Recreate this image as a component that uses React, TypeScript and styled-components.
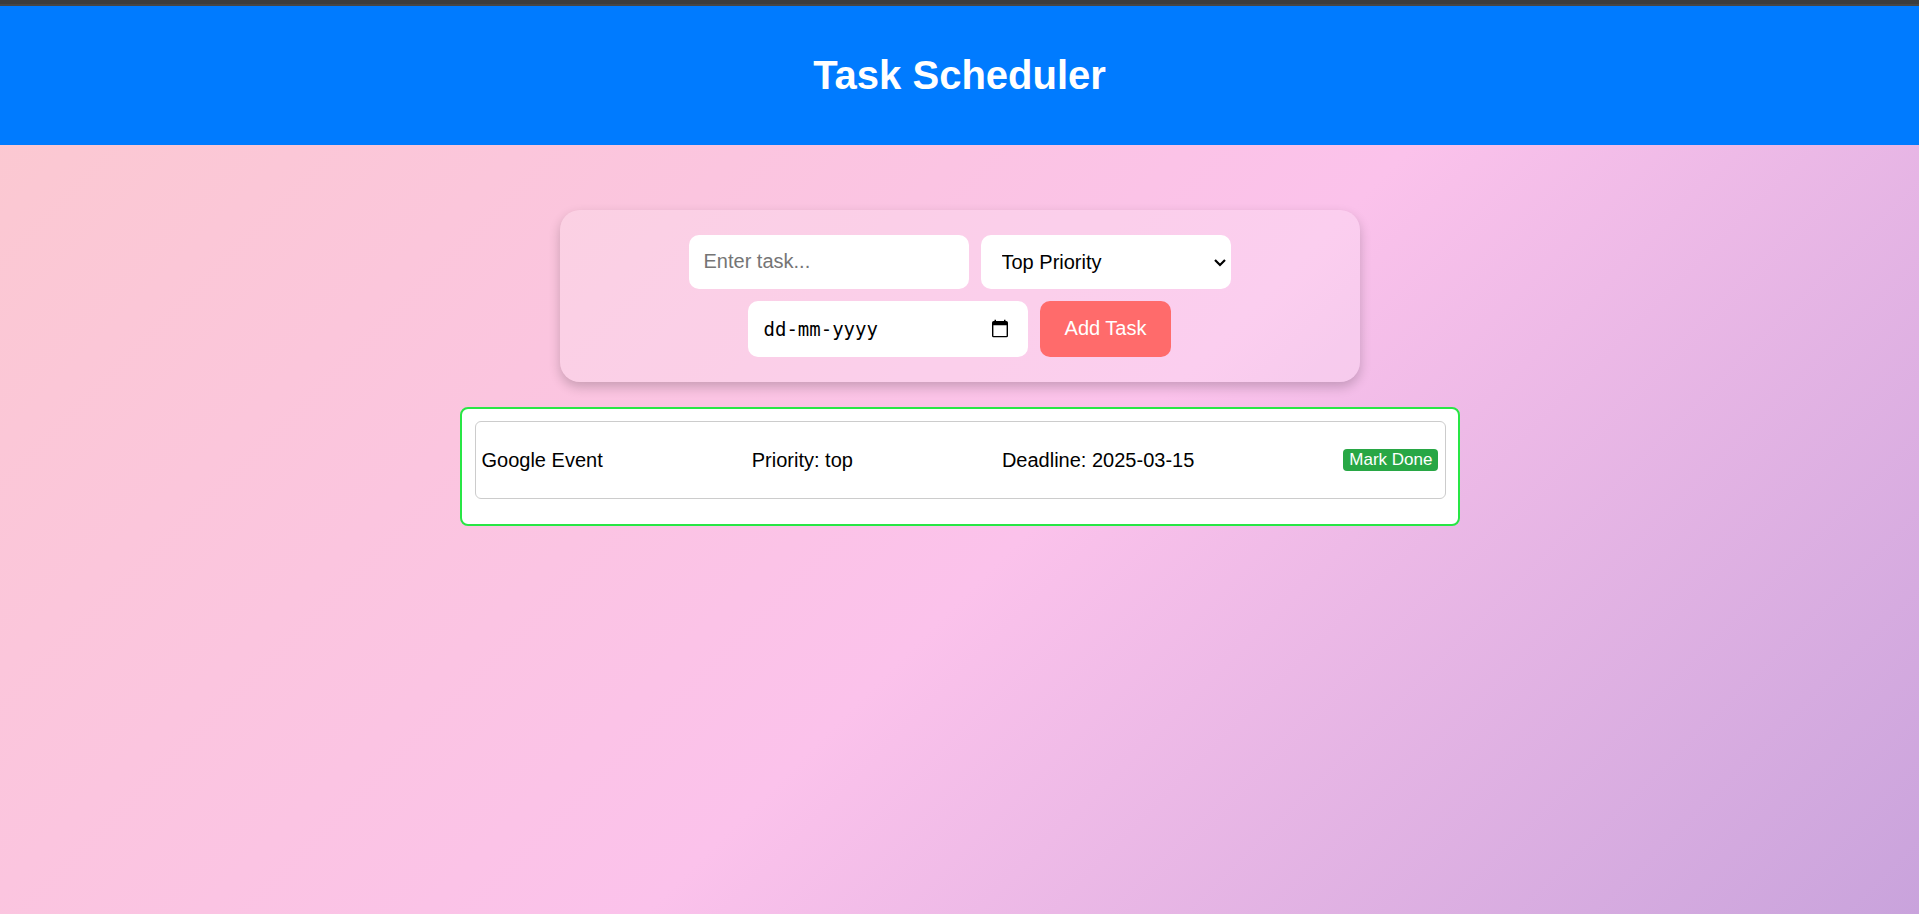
import React, { useState } from "react";
import styled, { createGlobalStyle } from "styled-components";

const GlobalStyle = createGlobalStyle`
  *, *::before, *::after { box-sizing: border-box; }
  body {
    margin: 0;
    font-family: Arial, "Liberation Sans", sans-serif;
    font-size: 20px;
    line-height: 22px;
    color: #000;
  }
`;

const Page = styled.div`
  min-height: 100vh;
  display: flex;
  flex-direction: column;
  align-items: center;
  background: linear-gradient(135deg, #fbc9cf, #fbc2eb 55%, #c9a3dc);
`;

const Header = styled.header`
  align-self: stretch;
  padding: 48px 24px 47px;
  border-top: 4px solid #3c3c3c;
  box-shadow: inset 0 2px #464646;
  background: #007bff;
  color: #fff;
  text-align: center;
`;

const Title = styled.h1`
  margin: 0;
  font-size: 40px;
  line-height: 46px;
  font-weight: bold;
`;

const TaskForm = styled.form`
  width: 100%;
  max-width: 800px;
  margin-top: 65px;
  padding: 25px;
  display: flex;
  flex-wrap: wrap;
  justify-content: center;
  gap: 12px;
  border-radius: 20px;
  background: rgba(255, 255, 255, 0.2);
  box-shadow: 0 5px 12px rgba(0, 0, 0, 0.2);
`;

const Field = styled.div<{ $width: number; $height: number }>`
  position: relative;
  width: ${(p) => p.$width}px;
  height: ${(p) => p.$height}px;
  display: flex;
`;

const TextInput = styled.input<{ $mono?: boolean }>`
  flex: 1;
  min-width: 0;
  padding: ${(p) => (p.$mono ? "0 16px" : "0 15px 2px")};
  border: 0;
  border-radius: 10px;
  background: #fff;
  color: #000;
  font-family: ${(p) =>
    p.$mono ? '"DejaVu Sans Mono", monospace' : 'Arial, "Liberation Sans", sans-serif'};
  font-size: ${(p) => (p.$mono ? 19 : 20)}px;

  &::placeholder {
    color: ${(p) => (p.$mono ? "#000" : "#757575")};
    opacity: 1;
  }
`;

const PrioritySelect = styled.select`
  flex: 1;
  padding: 0 21px;
  appearance: none;
  border: 0;
  border-radius: 10px;
  background: #fff;
  color: #000;
  font-family: inherit;
  font-size: 20px;
`;

const Chevron = styled.svg`
  position: absolute;
  right: 4px;
  top: 20px;
  width: 14px;
  height: 14px;
  pointer-events: none;
`;

const PickerButton = styled.button`
  position: absolute;
  right: 18px;
  top: 18px;
  width: 20px;
  height: 20px;
  padding: 0;
  border: 0;
  background: none;
  cursor: pointer;

  svg { display: block; }
`;

const AddButton = styled.button`
  height: 56px;
  padding: 0 25px 2px;
  border: 0;
  border-radius: 10px;
  background: #ff6b6b;
  color: #fff;
  font-family: inherit;
  font-size: 20px;
  cursor: pointer;
`;

const TaskList = styled.ul`
  width: 100%;
  max-width: 1000px;
  margin: 25px 0 0;
  padding: 12px 12px 13px 13px;
  list-style: none;
  border: 2px solid #28e645;
  border-radius: 8px;
  background: #fff;
`;

const TaskRow = styled.li`
  min-height: 78px;
  margin-bottom: 12px;
  padding: 6px;
  display: flex;
  align-items: center;
  justify-content: space-between;
  border: 1px solid #ccc;
  border-radius: 6px;
`;

const DoneButton = styled.button`
  height: 22px;
  padding: 0 6px;
  border: 0;
  border-radius: 4px;
  background: #28a745;
  color: #fff;
  font-family: inherit;
  font-size: 17px;
  line-height: 22px;
  cursor: pointer;
`;

interface Task {
  name: string;
  priority: string;
  deadline: string;
}

export default function App() {
  const [tasks, setTasks] = useState<Task[]>([
    { name: "Google Event", priority: "top", deadline: "2025-03-15" },
  ]);
  const [name, setName] = useState("");
  const [priority, setPriority] = useState("top");
  const [deadline, setDeadline] = useState("");

  const addTask = (e: React.FormEvent) => {
    e.preventDefault();
    if (!name || !deadline) return;
    setTasks([...tasks, { name, priority, deadline }]);
    setName("");
    setDeadline("");
  };

  return (
    <Page>
      <GlobalStyle />
      <Header>
        <Title>Task Scheduler</Title>
      </Header>
      <TaskForm onSubmit={addTask}>
        <Field $width={280} $height={54}>
          <TextInput
            type="text"
            aria-label="Task"
            placeholder="Enter task..."
            value={name}
            onChange={(e) => setName(e.target.value)}
          />
        </Field>
        <Field $width={250} $height={54}>
          <PrioritySelect
            aria-label="Priority"
            value={priority}
            onChange={(e) => setPriority(e.target.value)}
          >
            <option value="top">Top Priority</option>
            <option value="middle">Middle Priority</option>
            <option value="low">Less Priority</option>
          </PrioritySelect>
          <Chevron viewBox="0 0 14 14" aria-hidden="true">
            <path d="M2 5l5 5 5-5" fill="none" stroke="#000" strokeWidth="2.2" />
          </Chevron>
        </Field>
        <Field $width={280} $height={56}>
          <TextInput
            $mono
            type="text"
            aria-label="Deadline"
            placeholder="dd-mm-yyyy"
            value={deadline}
            onChange={(e) => setDeadline(e.target.value)}
          />
          <PickerButton type="button" aria-label="Choose date">
            <svg width="20" height="20" viewBox="0 0 20 20" aria-hidden="true">
              <path
                fillRule="evenodd"
                d="M4.500 .8h1.500V2h8V.8h1.500V2h.8A1.700 1.700 0 0 1 18 3.700V16.800a1.500 1.500 0 0 1-1.500 1.500h-13A1.500 1.500 0 0 1 2 16.800V3.700A1.700 1.700 0 0 1 3.700 2h.8zM3.400 6.200v10.700h13.200V6.200z"
              />
            </svg>
          </PickerButton>
        </Field>
        <AddButton type="submit">Add Task</AddButton>
      </TaskForm>
      <TaskList>
        {tasks.map((task, i) => (
          <TaskRow key={i}>
            <span>{task.name}</span>
            <span>Priority: {task.priority}</span>
            <span>Deadline: {task.deadline}</span>
            <DoneButton type="button" onClick={() => setTasks(tasks.filter((_, j) => j !== i))}>
              Mark Done
            </DoneButton>
          </TaskRow>
        ))}
      </TaskList>
    </Page>
  );
}
